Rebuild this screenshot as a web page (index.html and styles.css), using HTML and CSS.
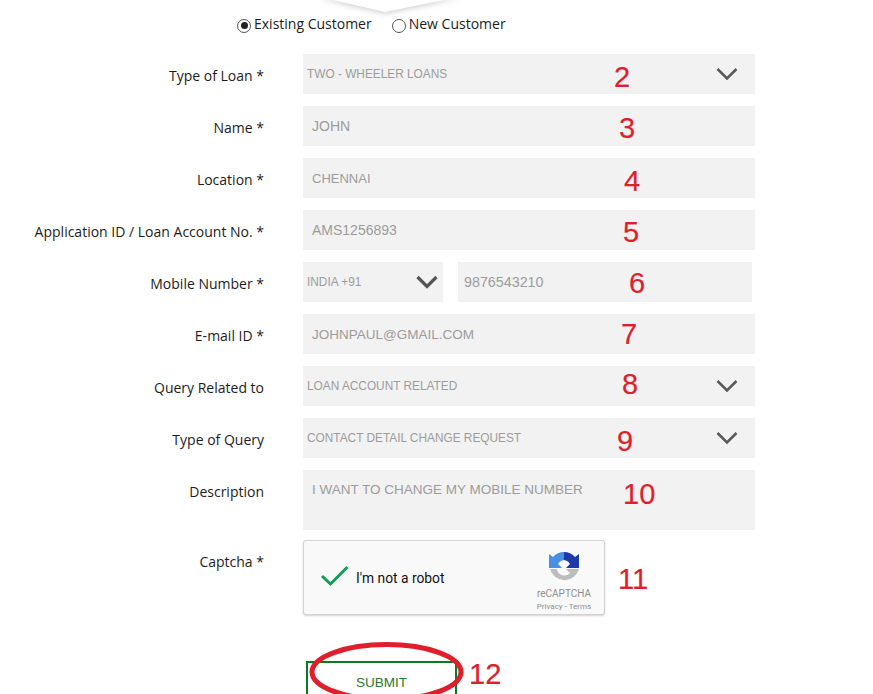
FILE: index.html
```html
<!DOCTYPE html>
<html lang="en">
<head>
<meta charset="utf-8">
<title>Query form</title>
<link rel="stylesheet" href="styles.css">
</head>
<body>
<svg class="notch" width="220" height="24" viewBox="0 0 220 24" aria-hidden="true">
  <polygon class="notch-shape" points="40,-3 105,12 178,-3" fill="#fff"/>
</svg>
<main class="page">
  <div class="radios">
    <label class="radio"><span class="dot on"></span>Existing Customer</label>
    <label class="radio"><span class="dot"></span>New Customer</label>
  </div>
  <form class="form">
    <div class="label">Type of Loan *</div>
    <div class="field select"><span class="small">TWO - WHEELER LOANS</span>
      <svg class="chev" width="22" height="14" viewBox="0 0 22 14"><path d="M1.5 2 L11 11.5 L20.500 2" fill="none" stroke="#5a5a5a" stroke-width="2.600"/></svg>
      <span class="num n2">2</span></div>

    <div class="label">Name *</div>
    <div class="field"><span>JOHN</span><span class="num n3">3</span></div>

    <div class="label">Location *</div>
    <div class="field"><span class="narrow">CHENNAI</span><span class="num n4">4</span></div>

    <div class="label">Application ID / Loan Account No. *</div>
    <div class="field"><span>AMS1256893</span><span class="num n5">5</span></div>

    <div class="label">Mobile Number *</div>
    <div class="mobile">
      <div class="field select code"><span class="small">INDIA +91</span>
        <svg class="chev" width="22" height="14" viewBox="0 0 22 14"><path d="M1.5 2 L11 11.5 L20.500 2" fill="none" stroke="#555" stroke-width="3.200"/></svg></div>
      <div class="field phone"><span>9876543210</span><span class="num n6">6</span></div>
    </div>

    <div class="label">E-mail ID *</div>
    <div class="field"><span class="tight">JOHNPAUL@GMAIL.COM</span><span class="num n7">7</span></div>

    <div class="label">Query Related to</div>
    <div class="field select"><span class="small">LOAN ACCOUNT RELATED</span>
      <svg class="chev" width="22" height="14" viewBox="0 0 22 14"><path d="M1.5 2 L11 11.5 L20.500 2" fill="none" stroke="#5a5a5a" stroke-width="2.600"/></svg>
      <span class="num n8">8</span></div>

    <div class="label">Type of Query</div>
    <div class="field select"><span class="small">CONTACT DETAIL CHANGE REQUEST</span>
      <svg class="chev" width="22" height="14" viewBox="0 0 22 14"><path d="M1.5 2 L11 11.5 L20.500 2" fill="none" stroke="#5a5a5a" stroke-width="2.600"/></svg>
      <span class="num n9">9</span></div>

    <div class="label">Description</div>
    <div class="field area"><span class="tight">I WANT TO CHANGE MY MOBILE NUMBER</span><span class="num n10">10</span></div>

    <div class="label cap-label">Captcha *</div>
    <div class="captcha-wrap">
      <div class="captcha">
        <svg class="tick" width="30" height="24" viewBox="0 0 30 24"><path d="M2 12 L10.500 20 L27.500 3" fill="none" stroke="#0f9d58" stroke-width="3"/></svg>
        <span class="robot">I'm not a robot</span>
        <div class="brand">
          <svg class="logo" width="30" height="32" viewBox="0 0 30 32">
            <path d="M1 17 L8 17 A7.500 7.500 0 0 0 21 21 L17 17 L30 17 A15 15 0 0 1 1 17 Z" fill="#bdbdbd"/>
            <path d="M15 0 A15 15 0 0 0 4 5 L0 2 L0 16 L13 16 L9 12 A8 8 0 0 1 15 8 Z" fill="#4a90e2"/>
            <path d="M15 0 A15 15 0 0 1 26 5 L30 2 L30 16 L17 16 L21 12 A8 8 0 0 0 15 8 Z" fill="#1c3aa9"/>
          </svg>
          <div class="rc">reCAPTCHA</div>
          <div class="terms">Privacy - Terms</div>
        </div>
      </div>
      <span class="num n11">11</span>
    </div>

    <div class="actions">
      <button type="button" class="submit">SUBMIT</button>
      <svg class="ellipse" width="160" height="62" viewBox="0 0 160 62"><ellipse cx="78.500" cy="30" rx="74.500" ry="27.500" fill="none" stroke="#e01f2d" stroke-width="5"/></svg>
      <span class="num n12">12</span>
    </div>
  </form>
</main>
</body>
</html>
```
FILE: styles.css
```css
html, body { margin: 0; padding: 0; background: #fff; }
body { width: 873px; height: 694px; overflow: hidden; position: relative; font-family: "Open Sans", sans-serif; color: #1c1c1c; }
.notch { position: absolute; left: 280px; top: 0; }
.notch-shape { filter: drop-shadow(0 1px 3px rgba(0,0,0,.22)); }
.page { padding-top: 14px; }
.radios { display: flex; margin-left: 237px; height: 19px; align-items: center; font-size: 14px; gap: 20px; }
.radio { display: flex; align-items: center; gap: 3px; line-height: 19px; }
.dot { width: 12px; height: 12px; border: 1px solid #555; border-radius: 50%; background: #fff; position: relative; top: 2px; }
.dot.on::after { content: ""; position: absolute; left: 2.500px; top: 2.500px; width: 7px; height: 7px; border-radius: 50%; background: #222; }
.form { display: grid; grid-template-columns: 264px 452px; column-gap: 39px; row-gap: 12px; margin-top: 21px; }
.label { text-align: right; font-size: 14px; line-height: 19px; padding-top: 12px; }
.field { position: relative; height: 40px; background: #f2f2f2; display: flex; align-items: center; padding-left: 9px; font-family: "Liberation Sans", sans-serif; font-size: 14px; color: #9c9c9c; box-sizing: border-box; }
.select { padding-left: 4px; }
.small { font-size: 11.850px; }
.tight { font-size: 13.500px; }
.narrow { font-size: 13px; }
.chev { position: absolute; right: 17px; top: 13px; }
.mobile { display: flex; gap: 15px; }
.code { width: 140px; }
.code .chev { right: 5px; }
.phone { width: 294px; padding-left: 6px; font-size: 14.300px; }
.area { height: 60px; align-items: flex-start; padding-top: 12px; }
.captcha-wrap { position: relative; height: 76px; margin-top: -2px; }
.cap-label { margin-top: -2px; padding-top: 12px; }
.captcha { width: 302px; height: 75px; box-sizing: border-box; background: #f9f9f9; border: 1px solid #d3d3d3; border-radius: 3px; box-shadow: 0 1px 2px rgba(0,0,0,.18); display: flex; align-items: center; font-family: Roboto, "Liberation Sans", sans-serif; position: relative; }
.tick { margin-left: 16px; margin-top: -3px; }
.robot { margin-left: 6px; font-size: 13.800px; color: #111; position: relative; }
.brand { position: absolute; right: 12px; top: 11px; width: 56px; text-align: center; }
.logo { display: block; margin: 0 auto; }
.rc { font-size: 10px; line-height: 13px; color: #8f8f8f; margin-top: 3px; }
.terms { font-size: 8px; line-height: 12px; margin-top: 1px; color: #8f8f8f; white-space: nowrap; }
.actions { grid-column: 2; position: relative; margin-top: 33px; height: 40px; }
.submit { display: block; width: 151px; height: 42px; margin-left: 3px; background: #fff; border: 2px solid #0a7a25; border-radius: 0; color: #1f7a2e; font-family: "Liberation Sans", sans-serif; font-size: 13.500px; padding: 0; }
.ellipse { position: absolute; left: 5px; top: -19px; }
.num { position: absolute; font-family: "Liberation Sans", sans-serif; font-size: 29px; line-height: 36px; color: #df1f2d; -webkit-text-stroke: 0.2px #df1f2d; }
.n2 { left: 311px; top: 5px; }
.n3 { left: 316px; top: 4px; }
.n4 { left: 321px; top: 5px; }
.n5 { left: 320px; top: 4px; }
.n6 { left: 171px; top: 3px; }
.n7 { left: 318px; top: 2px; }
.n8 { left: 319px; top: 0; }
.n9 { left: 314px; top: 5px; }
.n10 { left: 320px; top: 6px; }
.n11 { left: 315px; top: 21px; }
.n12 { left: 166px; top: -5px; }
```
